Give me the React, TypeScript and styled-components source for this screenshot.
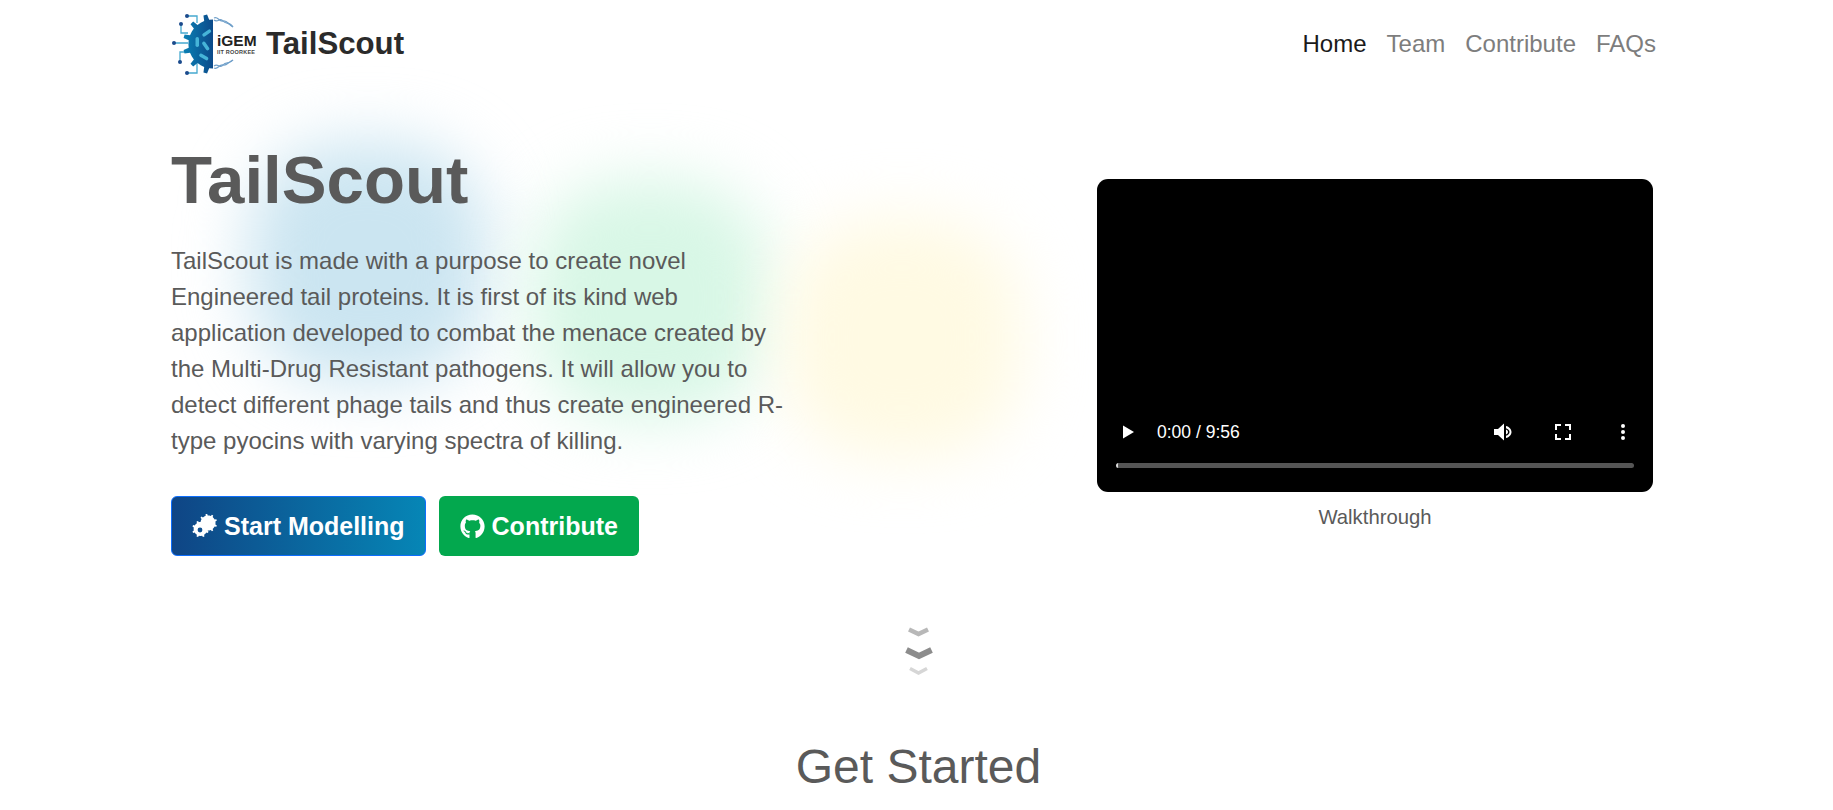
import { FC } from 'react'
import styled, { createGlobalStyle } from 'styled-components'
import { FaGithub } from 'react-icons/fa'

const GlobalStyle = createGlobalStyle`
  html, body {
    margin: 0;
    padding: 0;
    background: #fff;
    overflow: hidden;
    font-family: "Liberation Sans", Arial, sans-serif;
  }
`

const Page = styled.div`
  width: 1833px;
  height: 810px;
  overflow: hidden;
  box-sizing: border-box;
  padding: 0 177px 0 171px;
`

const Navbar = styled.nav`
  display: flex;
  align-items: center;
  justify-content: space-between;
  height: 88px;
`

const Brand = styled.a`
  display: flex;
  align-items: center;
  gap: 8px;
  font-size: 31.2px;
  font-weight: 700;
  color: #2b2b2b;
`

const NavLinks = styled.div`
  display: flex;
  gap: 20px;
`

const NavLink = styled.a<{ $active?: boolean }>`
  font-size: 24px;
  color: ${(p) => (p.$active ? '#1a1a1a' : '#7d7d7d')};
`

const Hero = styled.section`
  position: relative;
  display: flex;
  justify-content: space-between;
  height: 650px;
`

const Blob = styled.div<{ $color: string; $left: number; $top: number }>`
  position: absolute;
  left: ${(p) => p.$left}px;
  top: ${(p) => p.$top}px;
  width: 240px;
  height: 240px;
  border-radius: 40%;
  background: ${(p) => p.$color};
  filter: blur(32px);
`

const Intro = styled.div`
  position: relative;
  width: 616px;
`

const Title = styled.h1`
  margin: 51px 0 22px;
  font-size: 67.2px;
  line-height: 82px;
  font-weight: 700;
  color: #5a5a5a;
`

const Lead = styled.p`
  margin: 0 0 37px;
  font-size: 24px;
  line-height: 36px;
  color: #5a5a5a;
`

const Actions = styled.div`
  display: flex;
  gap: 13px;
`

const ActionButton = styled.a<{ $variant: 'primary' | 'success' }>`
  display: flex;
  align-items: center;
  gap: 7px;
  height: 60px;
  box-sizing: border-box;
  padding: 0 ${(p) => (p.$variant === 'primary' ? 20 : 21)}px;
  border-radius: 6px;
  color: #fff;
  font-size: 25px;
  font-weight: 700;
  background: ${(p) =>
    p.$variant === 'primary' ? 'linear-gradient(90deg, #0f4585, #0686b6)' : '#03a84e'};
  border: ${(p) => (p.$variant === 'primary' ? '1px solid #0d6efd' : 'none')};
  svg {
    font-size: 25px;
  }
`

const VideoColumn = styled.figure`
  position: relative;
  margin: 91px 3px 0 0;
  width: 556px;
  text-align: center;
`

const VideoFrame = styled.div`
  display: flex;
  flex-direction: column;
  justify-content: flex-end;
  height: 313px;
  box-sizing: border-box;
  padding: 0 18px 24px 19px;
  background: #000;
  border-radius: 11px;
`

const Controls = styled.div`
  display: flex;
  align-items: center;
  height: 30px;
  margin-bottom: 16px;
  color: #fff;
  font-size: 17.5px;
`

const ControlTime = styled.span`
  margin-left: 17px;
  flex: 1;
  text-align: left;
`

const ControlIcon = styled.svg`
  width: 24px;
  height: 24px;
  fill: #fff;
  flex: none;
`

const IconGap = styled.span<{ $w: number }>`
  width: ${(p) => p.$w}px;
  flex: none;
`

const Seek = styled.div`
  height: 5px;
  margin-right: 1px;
  border-radius: 3px;
  background: #555;
  border-left: 2px solid #ddd;
`

const Caption = styled.figcaption`
  margin-top: 12px;
  font-size: 20.3px;
  line-height: 26px;
  color: #5a5a5a;
`

const Chevrons = styled.div`
  position: absolute;
  left: 732px;
  top: 537px;
  width: 32px;
`

const GetStarted = styled.h2`
  margin: 0;
  padding-left: 10px;
  font-size: 48px;
  font-weight: 500;
  line-height: 58px;
  text-align: center;
  color: #5a5a5a;
`

// toothed outline for the small drawings, teeth spread over the given arc
const gearPath = (cx: number, cy: number, r: number, teeth: number, from = 0, to = 360) => {
  const pts: string[] = []
  const step = (to - from) / teeth
  const at = (rad: number, deg: number) =>
    `${(cx + rad * Math.cos((deg * Math.PI) / 180)).toFixed(2)} ${(cy + rad * Math.sin((deg * Math.PI) / 180)).toFixed(2)}`
  for (let i = 0; i < teeth; i++) {
    const a = from + i * step
    pts.push(at(r * 0.82, a), at(r * 0.82, a + step * 0.3), at(r, a + step * 0.38), at(r, a + step * 0.62), at(r * 0.82, a + step * 0.7))
  }
  pts.push(at(r * 0.82, to))
  return `M${pts.join('L')}Z`
}

const GearIcon: FC = () => (
  <svg width="25" height="24" viewBox="0 0 25 24">
    <path d={gearPath(16, 9, 9.2, 9)} fill="#fff" />
    <path d={gearPath(8.5, 15, 8.4, 8)} fill="#fff" />
    <circle cx="8" cy="16" r="2.4" fill="#0f4f8e" />
  </svg>
)

const Logo: FC = () => (
  <svg width="87" height="66" viewBox="0 0 87 66">
    <defs>
      <linearGradient id="logoGear" x1="0" x2="1" y1="0" y2="0">
        <stop offset="0" stopColor="#0a80b4" />
        <stop offset="1" stopColor="#0c4a8a" />
      </linearGradient>
    </defs>
    <path
      d="M16 5H26V12M10 13V22H17M3 32H17M9 51V41H17M16 62H26V52"
      stroke="#45a9cf"
      strokeWidth="1.3"
      fill="none"
    />
    <g fill="#1b4a8c">
      <circle cx="16" cy="5" r="2" />
      <circle cx="10" cy="13" r="2" />
      <circle cx="3" cy="32" r="2" />
      <circle cx="9" cy="51" r="2" />
      <circle cx="16" cy="62" r="2" />
    </g>
    <path d={gearPath(42, 33, 30, 6, 90, 270)} fill="url(#logoGear)" />
    <g fill="#46b4d8">
      <rect x="34" y="17" width="3.5" height="10" rx="1.7" transform="rotate(55 35.7 22)" />
      <rect x="24.5" y="26" width="3.5" height="10" rx="1.7" />
      <rect x="33" y="30" width="3.5" height="10" rx="1.7" transform="rotate(-35 34.7 35)" />
      <rect x="31" y="41" width="3.5" height="10" rx="1.7" transform="rotate(-60 32.7 46)" />
    </g>
    <g stroke="#6f9fc9" strokeWidth="1.2" fill="none">
      <path d="M43 7c4-2 5 4 9 3s5 3 10 6" />
      <path d="M43 9c4 3 6-3 9 1s6 0 10 6" />
      <path d="M43 57c4 2 5-4 9-3s5-3 10-5" />
      <path d="M43 55c4-3 6 3 9-1s6 0 10-5" />
    </g>
    <text x="46" y="35" fontFamily="Liberation Sans, sans-serif" fontWeight="700" fontSize="15.5" fill="#222">
      iGEM
    </text>
    <text x="46" y="43" fontFamily="Liberation Sans, sans-serif" fontSize="5.5" textLength="38" fill="#444">
      IIT ROORKEE
    </text>
  </svg>
)

const App: FC = () => (
  <Page>
    <GlobalStyle />
    <Navbar>
      <Brand>
        <Logo />
        TailScout
      </Brand>
      <NavLinks>
        <NavLink $active>Home</NavLink>
        <NavLink>Team</NavLink>
        <NavLink>Contribute</NavLink>
        <NavLink>FAQs</NavLink>
      </NavLinks>
    </Navbar>
    <Hero>
      <Blob $color="#cbe5f1" $left={77} $top={54} />
      <Blob $color="#d8f7e6" $left={359} $top={91} />
      <Blob $color="#fffae3" $left={611} $top={130} />
      <Intro>
        <Title>TailScout</Title>
        <Lead>
          TailScout is made with a purpose to create novel Engineered tail proteins. It is first of its kind web
          application developed to combat the menace created by the Multi-Drug Resistant pathogens. It will allow you
          to detect different phage tails and thus create engineered R-type pyocins with varying spectra of killing.
        </Lead>
        <Actions>
          <ActionButton $variant="primary">
            <GearIcon />
            Start Modelling
          </ActionButton>
          <ActionButton $variant="success">
            <FaGithub />
            Contribute
          </ActionButton>
        </Actions>
      </Intro>
      <VideoColumn>
        <VideoFrame>
          <Controls>
            <ControlIcon viewBox="0 0 24 24">
              <path d="M7 5.5v13l11-6.5z" />
            </ControlIcon>
            <ControlTime>0:00 / 9:56</ControlTime>
            <ControlIcon viewBox="0 0 24 24">
              <path d="M2 9v6h4l6 5.5V3.5L6 9zm12-3v2.2c2 .7 3.5 2 3.5 3.8s-1.5 3.1-3.5 3.8V18c3.2-.8 5.500-3 5.500-6s-2.300-5.200-5.500-6zm0 3.500v5c1.300-.5 2-1.400 2-2.500s-.7-2-2-2.500z" />
            </ControlIcon>
            <IconGap $w={35} />
            <ControlIcon viewBox="0 0 24 24">
              <path d="M6 14H4v6h6v-2H6zm-2-4h2V6h4V4H4zm14 8h-4v2h6v-6h-2zM14 4v2h4v4h2V4z" />
            </ControlIcon>
            <IconGap $w={36} />
            <ControlIcon viewBox="0 0 24 24">
              <path d="M12 8a2 2 0 1 0 0-4 2 2 0 0 0 0 4zm0 2a2 2 0 1 0 0 4 2 2 0 0 0 0-4zm0 6a2 2 0 1 0 0 4 2 2 0 0 0 0-4z" />
            </ControlIcon>
          </Controls>
          <Seek />
        </VideoFrame>
        <Caption>Walkthrough</Caption>
      </VideoColumn>
      <Chevrons>
        <svg width="32" height="56" viewBox="0 0 32 56" fill="none">
          <path d="M6 4.500l9.500 4.500 9.500-4.500" stroke="#b8b8b8" strokeWidth="4.500" />
          <path d="M3.500 25l12.500 6 12.500-6" stroke="#8c8c8c" strokeWidth="6" />
          <path d="M7 43.500l8.500 4.500 8.500-4.500" stroke="#d6d6d6" strokeWidth="3.500" />
        </svg>
      </Chevrons>
    </Hero>
    <GetStarted>Get Started</GetStarted>
  </Page>
)

export default App
